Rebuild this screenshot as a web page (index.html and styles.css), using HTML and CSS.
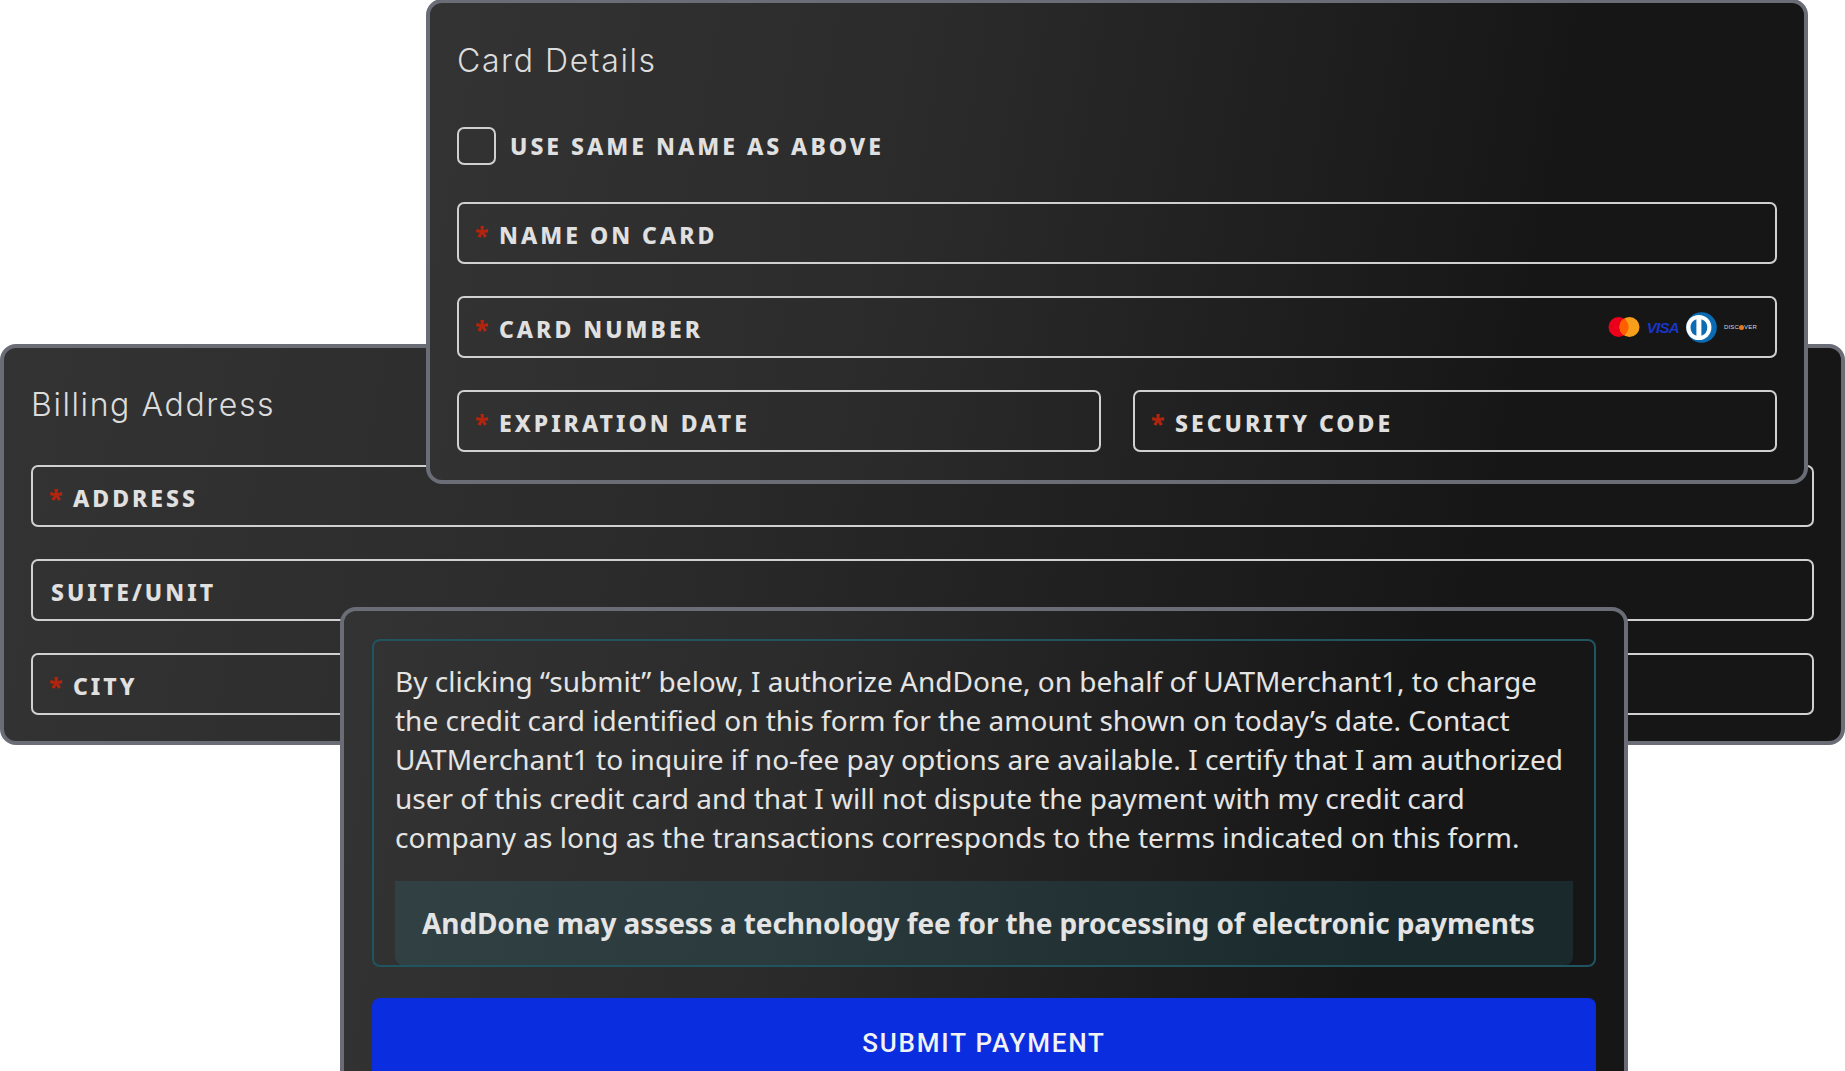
FILE: index.html
```html
<!DOCTYPE html>
<html lang="en">

<head>
  <meta charset="UTF-8" />
  <meta name="viewport" content="width=device-width, initial-scale=1.0" />
  <title>Payment Form</title>
  <link rel="stylesheet" href="styles.css">
</head>

<body>
  <div class="canvas">
    <section class="card billing">
      <h2 class="card-title">Billing Address</h2>
      <div class="fields">
        <div class="field"><span class="req">*</span>Address</div>
        <div class="field">Suite/Unit</div>
        <div class="field"><span class="req">*</span>City</div>
      </div>
    </section>

    <section class="card details">
      <h2 class="card-title">Card Details</h2>
      <label class="same-name"><span class="checkbox"></span>Use same name as above</label>
      <div class="fields">
        <div class="field"><span class="req">*</span>Name on card</div>
        <div class="field">
          <span class="req">*</span>Card number
          <div class="brands">
            <svg class="mc" width="32" height="22" viewBox="0 0 32 22">
              <circle cx="10.5" cy="11" r="10" fill="#eb001b" />
              <circle cx="21.5" cy="11" r="10" fill="#f79e1b" />
              <path d="M16 2.6a10 10 0 0 1 0 16.8a10 10 0 0 1 0-16.8z" fill="#ff5f00" />
            </svg>
            <span class="visa">VISA</span>
            <svg class="diners" width="31" height="31" viewBox="0 0 31 31">
              <circle cx="15.5" cy="15.5" r="15.3" fill="#0b6cb3" />
              <circle cx="12.8" cy="15.5" r="12.6" fill="#fff" />
              <path d="M10.4 7.2a8.8 8.8 0 0 0 0 16.6zM15.4 7.2v16.6a8.8 8.8 0 0 0 0-16.6z" fill="#0b6cb3" />
            </svg>
            <span class="discover">DISC<i class="dot"></i>VER</span>
          </div>
        </div>
        <div class="field-row">
          <div class="field"><span class="req">*</span>Expiration date</div>
          <div class="field"><span class="req">*</span>Security code</div>
        </div>
      </div>
    </section>

    <section class="card consent">
      <div class="notice">
        <p class="notice-text">By clicking “submit” below, I authorize AndDone, on behalf of UATMerchant1, to charge the credit card identified on this form for the amount shown on today’s date. Contact UATMerchant1 to inquire if no-fee pay options are available. I certify that I am authorized user of this credit card and that I will not dispute the payment with my credit card company as long as the transactions corresponds to the terms indicated on this form.</p>
        <div class="fee">AndDone may assess a technology fee for the processing of electronic payments</div>
      </div>
      <button class="submit">Submit payment</button>
    </section>
  </div>
</body>

</html>
```

FILE: styles.css
```css
html,
body {
  margin: 0;
  height: 100%;
  background-color: #fff;
  overflow: hidden;
}

body {
  font-family: 'Noto Sans', sans-serif;
  color: #e4e4e4;
}

/* the three cards overlap each other on a free canvas */
.canvas {
  position: relative;
  width: 1845px;
  height: 1071px;
  overflow: hidden;
}

.card {
  position: absolute;
  box-sizing: border-box;
  border: 4px solid #6a6d76;
  border-radius: 16px;
  background: linear-gradient(100deg, #333 0%, #2b2b2b 35%, #161616 80%);
}

.billing {
  left: 0;
  top: 344px;
  width: 1845px;
  height: 401px;
  padding: 32px 27px 0;
}

.details {
  left: 426px;
  top: -1px;
  width: 1382px;
  height: 485px;
  padding: 33px 27px 0;
}

.consent {
  left: 340px;
  top: 607px;
  width: 1288px;
  height: 520px;
  padding: 28px 28px 0;
}

.card-title {
  margin: 0;
  font-family: 'Inter', sans-serif;
  font-size: 32px;
  line-height: 50px;
  font-weight: 300;
  letter-spacing: 1.6px;
  color: #dcdcdc;
}

.billing .card-title {
  margin-bottom: 35px;
}

.fields {
  display: flex;
  flex-direction: column;
  gap: 32px;
}

.field-row {
  display: flex;
  gap: 32px;
}

.field-row .field {
  flex: 1;
}

.field {
  display: flex;
  align-items: center;
  box-sizing: border-box;
  height: 62px;
  padding: 3px 18px 0;
  border: 2px solid #d0d0d0;
  border-radius: 7px;
  font-size: 23px;
  font-weight: 800;
  letter-spacing: 3px;
  text-transform: uppercase;
  color: #e0e0e0;
}

.req {
  width: 24px;
  margin-left: -2px;
  margin-top: 1px;
  color: #b3240f;
  font-size: 25px;
  letter-spacing: 0;
}

.same-name {
  display: flex;
  align-items: center;
  gap: 14px;
  margin: 41px 0 37px;
  font-size: 23px;
  font-weight: 800;
  letter-spacing: 3px;
  text-transform: uppercase;
  color: #e0e0e0;
}

.checkbox {
  box-sizing: border-box;
  width: 39px;
  height: 38px;
  border: 2px solid #d0d0d0;
  border-radius: 7px;
}

.brands {
  display: flex;
  align-items: center;
  gap: 7px;
  margin-left: auto;
  margin-top: -3px;
}

.visa {
  font-family: 'Liberation Sans', sans-serif;
  font-size: 15px;
  font-weight: 700;
  font-style: italic;
  letter-spacing: -0.7px;
  color: #1a35c8;
}

.discover {
  display: flex;
  align-items: center;
  font-family: 'Liberation Sans', sans-serif;
  font-size: 6px;
  font-weight: 400;
  letter-spacing: 0.2px;
  color: #d8d8d8;
}

.dot {
  width: 5px;
  height: 5px;
  border-radius: 50%;
  background-color: #e8791f;
}

.notice {
  box-sizing: border-box;
  height: 328px;
  padding: 21px 21px 0;
  border: 2px solid #1f5460;
  border-radius: 8px;
}

.notice-text {
  margin: 0 0 24px;
  font-size: 28px;
  line-height: 39px;
  color: #e4e4e4;
}

.fee {
  box-sizing: border-box;
  height: 84px;
  padding: 0 27px;
  line-height: 84px;
  border-radius: 0 0 8px 8px;
  background-color: rgba(50, 140, 160, 0.16);
  font-size: 28px;
  font-weight: 700;
  letter-spacing: -0.1px;
  white-space: nowrap;
  color: #e4e4e4;
}

.submit {
  display: block;
  width: 100%;
  height: 90px;
  margin-top: 31px;
  padding: 0;
  border: none;
  border-radius: 8px;
  background-color: #0a2de0;
  color: #f2f2f2;
  font-family: 'Roboto', sans-serif;
  font-size: 26px;
  font-weight: 500;
  letter-spacing: 1.8px;
  text-transform: uppercase;
}
```
